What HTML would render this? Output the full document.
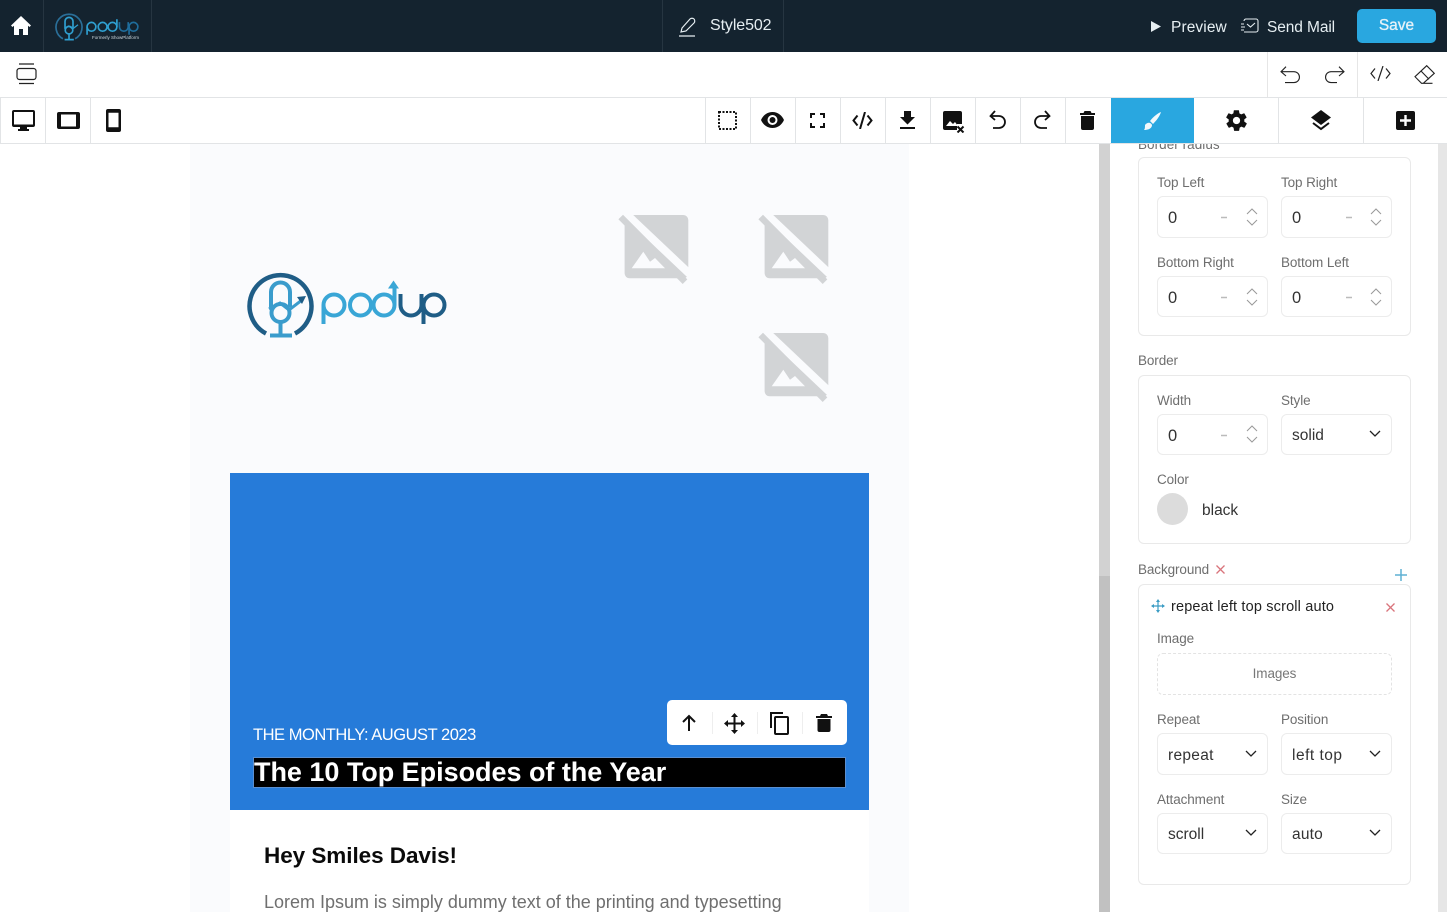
<!DOCTYPE html>
<html><head><meta charset="utf-8"><title>Style502</title>
<style>
html,body{margin:0;padding:0;width:1447px;height:912px;overflow:hidden;background:#fff;font-family:"Liberation Sans",sans-serif}
div,span,svg{position:absolute;box-sizing:border-box}
.t{white-space:nowrap;line-height:18px;height:18px}
.lab{font-size:13.5px;color:#6e6e6e;letter-spacing:-.1px}
.val{font-size:15.5px;color:#333}
.box{background:#fff;border:1px solid #ececec;border-radius:6px}
.card{background:#fff;border:1px solid #e9e9e9;border-radius:6px}
.vl{top:98px;width:1px;height:45px;background:#e2e4e6}
.w{color:#e6eef2;font-size:16px}
</style></head><body>

<!-- canvas -->
<div style="left:190px;top:143px;width:719px;height:769px;background:#fafbfd"></div>
<div style="left:230px;top:473px;width:639px;height:337px;background:#267bd9"></div>
<div style="left:230px;top:810px;width:639px;height:102px;background:#fff"></div>

<!-- logo -->
<svg style="left:240px;top:265px" width="215" height="80" viewBox="0 0 215 80" fill="none">
<path d="M26 68.500A31 31 0 1 1 55 68.500" stroke="#1f5d86" stroke-width="4.500"/>
<path d="M31 42V27a9.500 9.500 0 0 1 19 0v15" stroke="#3a9ccc" stroke-width="4"/>
<circle cx="40.500" cy="48" r="9" stroke="#3a9ccc" stroke-width="4"/>
<path d="M29 44l11-6 9 7 13-10" stroke="#3a9ccc" stroke-width="3"/>
<path d="M66 31l-9 1 5 7z" fill="#1f5d86"/>
<path d="M40.500 58v11" stroke="#3a9ccc" stroke-width="4"/>
<path d="M30 70.500h22" stroke="#3a9ccc" stroke-width="4"/>
<circle cx="94" cy="40" r="10.500" stroke="#39a6d6" stroke-width="4"/>
<path d="M83.500 40v19" stroke="#39a6d6" stroke-width="4"/>
<circle cx="120.500" cy="40" r="10.500" stroke="#39a6d6" stroke-width="4"/>
<circle cx="144" cy="40" r="10.500" stroke="#39a6d6" stroke-width="4"/>
<path d="M154.500 22v18" stroke="#39a6d6" stroke-width="4"/>
<path d="M153.500 15.500l-5.500 8h11z" fill="#39a6d6"/>
<path d="M160.500 29v11a10.500 10.500 0 0 0 21 0V29" stroke="#1f5d86" stroke-width="4"/>
<circle cx="194" cy="40" r="10.500" stroke="#1f5d86" stroke-width="4"/>
<path d="M183.500 40v19" stroke="#1f5d86" stroke-width="4"/>
</svg>

<!-- broken images -->
<svg style="left:617px;top:213px" width="73" height="73" viewBox="0 0 73 73"><rect x="7.600" y="2" width="63.700" height="63.300" rx="5" fill="#d2d4d6"/><path d="M3 -5L78 66" stroke="#fafbfd" stroke-width="8"/><path d="M3.700 4L68 68.700" stroke="#d2d4d6" stroke-width="6.500"/><path d="M14.700 55.300L26.300 38.700 33 48.700 38 45 48 55.300z" fill="#fafbfd"/></svg>
<svg style="left:757px;top:213px" width="73" height="73" viewBox="0 0 73 73"><rect x="7.600" y="2" width="63.700" height="63.300" rx="5" fill="#d2d4d6"/><path d="M3 -5L78 66" stroke="#fafbfd" stroke-width="8"/><path d="M3.700 4L68 68.700" stroke="#d2d4d6" stroke-width="6.500"/><path d="M14.700 55.300L26.300 38.700 33 48.700 38 45 48 55.300z" fill="#fafbfd"/></svg>
<svg style="left:757px;top:331px" width="73" height="73" viewBox="0 0 73 73"><rect x="7.600" y="2" width="63.700" height="63.300" rx="5" fill="#d2d4d6"/><path d="M3 -5L78 66" stroke="#fafbfd" stroke-width="8"/><path d="M3.700 4L68 68.700" stroke="#d2d4d6" stroke-width="6.500"/><path d="M14.700 55.300L26.300 38.700 33 48.700 38 45 48 55.300z" fill="#fafbfd"/></svg>

<!-- hero text -->
<div class="t" style="left:253px;top:726px;font-size:16.500px;color:#fff;letter-spacing:-.47px">THE MONTHLY: AUGUST 2023</div>
<div style="left:253px;top:757px;width:593px;height:31px;background:#000;border:1px solid #5a8fd0"></div>
<div class="t" style="left:254px;top:757px;height:30px;line-height:30px;font-size:27px;font-weight:bold;color:#fff;letter-spacing:-.03px">The 10 Top Episodes of the Year</div>
<div class="t" style="left:264px;top:843px;height:26px;line-height:26px;font-size:22.500px;font-weight:bold;color:#0a0a0a;letter-spacing:-.05px">Hey Smiles Davis!</div>
<div class="t" style="left:264px;top:890px;height:24px;line-height:24px;font-size:18px;color:#6f6f6f;letter-spacing:-.01px">Lorem Ipsum is simply dummy text of the printing and typesetting</div>

<!-- floating toolbar -->
<div style="left:667px;top:700px;width:180px;height:45px;background:#fff;border-radius:5px"></div>
<div style="left:712px;top:712px;width:1px;height:22px;background:#eee"></div>
<div style="left:757px;top:712px;width:1px;height:22px;background:#eee"></div>
<div style="left:802px;top:712px;width:1px;height:22px;background:#eee"></div>
<svg style="left:680px;top:714px" width="18" height="18" viewBox="0 0 18 18" fill="none" stroke="#111" stroke-width="2"><path d="M9 17V2M3 8l6-6 6 6"/></svg>
<svg style="left:724px;top:713px" width="21" height="21" viewBox="0 0 21 21" fill="none" stroke="#111" stroke-width="2"><path d="M10.500 3v15M3 10.500h15"/><path d="M7 4l3.500-4L14 4zM7 17l3.500 4 3.500-4zM4 7l-4 3.500L4 14zM17 7l4 3.500-4 3.500z" fill="#111" stroke="none"/></svg>
<svg style="left:769px;top:712px" width="21" height="23" viewBox="0 0 21 23" fill="none" stroke="#111" stroke-width="2"><path d="M2 16V1h12"/><rect x="6" y="5" width="13" height="17" rx="1"/></svg>
<svg style="left:816px;top:714px" width="16" height="18" viewBox="0 0 16 18"><path d="M5 0h6l1 2h4v2H0V2h4zM1.500 5h13v11a2 2 0 0 1-2 2h-9a2 2 0 0 1-2-2z" fill="#111"/></svg>

<!-- canvas scrollbar -->
<div style="left:1099px;top:143px;width:11px;height:433px;background:#d2d2d2"></div>
<div style="left:1099px;top:576px;width:11px;height:336px;background:#c1c1c1"></div>
<div style="left:1438px;top:143px;width:9px;height:769px;background:#e6e6e6"></div>

<!-- panel -->
<div class="t lab" style="left:1138px;top:136px;letter-spacing:.05px">Border radius</div>
<div style="left:1111px;top:98px;width:327px;height:46px;background:#fff"></div>

<div class="card" style="left:1138px;top:157px;width:273px;height:179px"></div>
<div class="t lab" style="left:1157px;top:174px">Top Left</div>
<div class="t lab" style="left:1281px;top:174px">Top Right</div>
<div class="box" style="left:1157px;top:196px;width:111px;height:42px"></div>
<div class="box" style="left:1281px;top:196px;width:111px;height:42px"></div>
<div class="t val" style="left:1168px;top:209px;font-size:16.500px">0</div>
<div class="t val" style="left:1292px;top:209px;font-size:16.500px">0</div>
<div class="t lab" style="left:1157px;top:254px">Bottom Right</div>
<div class="t lab" style="left:1281px;top:254px">Bottom Left</div>
<div class="box" style="left:1157px;top:276px;width:111px;height:41px"></div>
<div class="box" style="left:1281px;top:276px;width:111px;height:41px"></div>
<div class="t val" style="left:1168px;top:289px;font-size:16.500px">0</div>
<div class="t val" style="left:1292px;top:289px;font-size:16.500px">0</div>

<div class="t lab" style="left:1138px;top:352px">Border</div>
<div class="card" style="left:1138px;top:375px;width:273px;height:169px"></div>
<div class="t lab" style="left:1157px;top:392px">Width</div>
<div class="t lab" style="left:1281px;top:392px">Style</div>
<div class="box" style="left:1157px;top:414px;width:111px;height:41px"></div>
<div class="box" style="left:1281px;top:414px;width:111px;height:41px"></div>
<div class="t val" style="left:1168px;top:427px;font-size:16.500px">0</div>
<div class="t val" style="left:1292px;top:427px">solid</div>
<div class="t lab" style="left:1157px;top:471px">Color</div>
<div style="left:1157px;top:493px;width:31px;height:32px;border-radius:50%;background:#dcdcdc"></div>
<div class="t val" style="left:1202px;top:502px">black</div>

<div class="t lab" style="left:1138px;top:561px">Background</div>
<svg style="left:1215px;top:564px" width="11" height="11" viewBox="0 0 11 11" stroke="#d9747c" stroke-width="1.300"><path d="M1.500 1.500l8 8M9.500 1.500l-8 8"/></svg>
<svg style="left:1394px;top:568px" width="14" height="14" viewBox="0 0 14 14" stroke="#5fb0d4" stroke-width="1.500"><path d="M7 1v12M1 7h12"/></svg>
<div class="card" style="left:1138px;top:584px;width:273px;height:301px"></div>
<svg style="left:1151px;top:599px" width="14" height="14" viewBox="0 0 14 14" fill="none" stroke="#3b9cc4" stroke-width="1.200"><path d="M7 1v12M1 7h12"/><path d="M5 3l2-3 2 3zM5 11l2 3 2-3zM3 5l-3 2 3 2zM11 5l3 2-3 2z" fill="#3b9cc4" stroke="none"/></svg>
<div class="t" style="left:1171px;top:598px;font-size:14.500px;color:#222;letter-spacing:.16px">repeat left top scroll auto</div>
<svg style="left:1385px;top:602px" width="11" height="11" viewBox="0 0 11 11" stroke="#d9747c" stroke-width="1.300"><path d="M1.500 1.500l8 8M9.500 1.500l-8 8"/></svg>
<div class="t lab" style="left:1157px;top:630px">Image</div>
<div style="left:1157px;top:653px;width:235px;height:42px;border:1px dashed #e3e3e3;border-radius:6px"></div>
<div class="t lab" style="left:1157px;top:665px;width:235px;text-align:center;color:#777">Images</div>
<div class="t lab" style="left:1157px;top:711px">Repeat</div>
<div class="t lab" style="left:1281px;top:711px">Position</div>
<div class="box" style="left:1157px;top:733px;width:111px;height:42px"></div>
<div class="box" style="left:1281px;top:733px;width:111px;height:42px"></div>
<div class="t val" style="left:1168px;top:747px;letter-spacing:.3px">repeat</div>
<div class="t val" style="left:1292px;top:747px;letter-spacing:.5px">left top</div>
<div class="t lab" style="left:1157px;top:791px">Attachment</div>
<div class="t lab" style="left:1281px;top:791px">Size</div>
<div class="box" style="left:1157px;top:813px;width:111px;height:41px"></div>
<div class="box" style="left:1281px;top:813px;width:111px;height:41px"></div>
<div class="t val" style="left:1168px;top:826px">scroll</div>
<div class="t val" style="left:1292px;top:826px;letter-spacing:.2px">auto</div>

<!-- number spinners -->
<svg style="left:1157px;top:196px" width="235" height="260" viewBox="0 0 235 260" fill="none" stroke="#999" stroke-width="1">
<path d="M64 21.500h6M189 21.500h6M64 101.500h6M189 101.500h6M64 239.500h6" stroke="#bbb" stroke-width="1.500"/>
<path d="M90 18l5-5 5 5M90 24l5 5 5-5M214 18l5-5 5 5M214 24l5 5 5-5M90 98l5-5 5 5M90 104l5 5 5-5M214 98l5-5 5 5M214 104l5 5 5-5M90 235l5-5 5 5M90 241l5 5 5-5"/>
</svg>
<!-- select chevrons -->
<svg style="left:1157px;top:414px" width="235" height="440" viewBox="0 0 235 440" fill="none" stroke="#222" stroke-width="1.300">
<path d="M213 17l5 5 5-5M89 337l5 5 5-5M213 337l5 5 5-5M89 416l5 5 5-5M213 416l5 5 5-5"/>
</svg>

<!-- top bar -->
<div style="left:0;top:0;width:1447px;height:52px;background:#14232f"></div>
<div style="left:43px;top:0;width:1px;height:52px;background:#263541"></div>
<div style="left:151px;top:0;width:1px;height:52px;background:#263541"></div>
<div style="left:662px;top:0;width:1px;height:52px;background:#263541"></div>
<div style="left:783px;top:0;width:1px;height:52px;background:#263541"></div>
<svg style="left:11px;top:16px" width="20" height="19" viewBox="0 0 20 19"><path d="M10 0L0 9.500l1.500 1.500L3 9.700V19h5v-6h4v6h5V9.700L18.500 11 20 9.500z" fill="#fff"/></svg>
<svg style="left:52px;top:10px" width="92" height="34" viewBox="0 0 92 34" fill="none">
<g transform="scale(.42)">
<path d="M26 68.500A31 31 0 1 1 55 68.500" stroke="#2a6f99" stroke-width="4"/>
<path d="M31 42V27a9.500 9.500 0 0 1 19 0v15" stroke="#2f9fd0" stroke-width="4"/>
<circle cx="40.500" cy="48" r="9" stroke="#2f9fd0" stroke-width="4"/>
<path d="M29 44l11-6 9 7 13-10" stroke="#2f9fd0" stroke-width="3"/>
<path d="M40.500 58v11M30 70.500h22" stroke="#2f9fd0" stroke-width="4"/>
<circle cx="94" cy="40" r="10.500" stroke="#2f9fd0" stroke-width="4"/>
<path d="M83.500 40v19" stroke="#2f9fd0" stroke-width="4"/>
<circle cx="120.500" cy="40" r="10.500" stroke="#2f9fd0" stroke-width="4"/>
<circle cx="144" cy="40" r="10.500" stroke="#2f9fd0" stroke-width="4"/>
<path d="M154.500 22v18" stroke="#2f9fd0" stroke-width="4"/>
<path d="M160.500 29v11a10.500 10.500 0 0 0 21 0V29" stroke="#1f6d9c" stroke-width="4"/>
<circle cx="194" cy="40" r="10.500" stroke="#1f6d9c" stroke-width="4"/>
<path d="M183.500 40v19" stroke="#1f6d9c" stroke-width="4"/>
</g>
</svg>
<div class="t" style="left:92px;top:34px;height:8px;line-height:8px;font-size:4.500px;color:#cfd8de">Formerly ShowPlatform</div>

<svg style="left:679px;top:17px" width="18" height="20" viewBox="0 0 18 20" fill="none" stroke="#e6eef2" stroke-width="1.200"><path d="M0 19h16M2 15l1-4L11 2c1-1 3-1 4 0s1 3 0 4l-8 8z"/></svg>
<div class="t w" style="left:710px;top:17px;letter-spacing:-.1px">Style502</div>
<svg style="left:1151px;top:21px" width="10" height="11" viewBox="0 0 10 11"><path d="M0 0l10 5.500L0 11z" fill="#e6eef2"/></svg>
<div class="t w" style="left:1171px;top:19px;font-size:15.500px;letter-spacing:.1px">Preview</div>
<svg style="left:1241px;top:18px" width="18" height="17" viewBox="0 0 18 17" fill="none" stroke="#e6eef2" stroke-width="1.100"><path d="M3 3V3a2 2 0 0 1 2-2h10a2 2 0 0 1 2 2v9a2 2 0 0 1-2 2H3M6 6l3.500 3L14 5M0 6h3M0 9h4M0 12h3"/></svg>
<div class="t w" style="left:1267px;top:19px;font-size:15.500px;letter-spacing:-.1px">Send Mail</div>
<div style="left:1357px;top:9px;width:79px;height:34px;background:#29a7e0;border-radius:5px"></div>
<div class="t" style="left:1357px;top:17px;width:79px;text-align:center;font-size:15.500px;color:#e6f2f8;-webkit-text-stroke:.3px #e6f2f8">Save</div>

<!-- second row -->
<div style="left:0;top:52px;width:1447px;height:46px;background:#fff"></div>
<div style="left:0;top:97px;width:1447px;height:1px;background:#e2e4e6"></div>
<div style="left:1267px;top:52px;width:1px;height:45px;background:#e6e6e6"></div>
<div style="left:1357px;top:52px;width:1px;height:45px;background:#e6e6e6"></div>
<svg style="left:16px;top:63px" width="21" height="22" viewBox="0 0 21 22" fill="none" stroke="#222" stroke-width="1.200"><path d="M3 1h15M3 20.500h15"/><rect x="1" y="5.500" width="19" height="11" rx="2.500"/></svg>
<svg style="left:1280px;top:65px" width="22" height="19" viewBox="0 0 22 19" fill="none" stroke="#222" stroke-width="1.100"><path d="M6 1.700L1 6.700 6 11M1 6.700H14a5.400 5.400 0 0 1 0 10.900H5"/></svg>
<svg style="left:1324px;top:65px" width="22" height="19" viewBox="0 0 22 19" fill="none" stroke="#222" stroke-width="1.100"><path d="M15 1.700L20 6.700 15 11M20 6.700H7a5.400 5.400 0 0 0 0 10.900H13"/></svg>
<svg style="left:1370px;top:66px" width="21" height="15" viewBox="0 0 21 15" fill="none" stroke="#222" stroke-width="1.200"><path d="M5 2.500L1 7.500l4 5M16 2.500l4 5-4 5M13 0L8 15"/></svg>
<svg style="left:1414px;top:64px" width="22" height="21" viewBox="0 0 22 21" fill="none" stroke="#222" stroke-width="1.100"><path d="M1 12.700L12.700 1.700 20.300 9.300 9.300 19.300H7.500zM7 7l8 8.300M9 19.300h9.500"/></svg>

<!-- tool row -->
<div style="left:0;top:143px;width:1447px;height:1px;background:#e2e4e6"></div>
<div class="vl" style="left:0"></div><div class="vl" style="left:45px"></div><div class="vl" style="left:90px"></div>
<div class="vl" style="left:705px"></div><div class="vl" style="left:750px"></div><div class="vl" style="left:795px"></div><div class="vl" style="left:840px"></div><div class="vl" style="left:885px"></div><div class="vl" style="left:930px"></div><div class="vl" style="left:975px"></div><div class="vl" style="left:1020px"></div><div class="vl" style="left:1065px"></div><div class="vl" style="left:1278px"></div><div class="vl" style="left:1363px"></div>

<svg style="left:12px;top:110px" width="23" height="21" viewBox="0 0 23 21"><path d="M2 0h19a2 2 0 0 1 2 2v13a2 2 0 0 1-2 2h-6v2h2v2H6v-2h2v-2H2a2 2 0 0 1-2-2V2a2 2 0 0 1 2-2zm0 2v12.500h19V2z" fill="#111" fill-rule="evenodd"/></svg>
<svg style="left:57px;top:112px" width="23" height="17" viewBox="0 0 23 17"><path d="M2 0h19a2 2 0 0 1 2 2v13a2 2 0 0 1-2 2H2a2 2 0 0 1-2-2V2a2 2 0 0 1 2-2zm2 2.500v12h15v-12z" fill="#111" fill-rule="evenodd"/></svg>
<svg style="left:106px;top:109px" width="15" height="23" viewBox="0 0 15 23"><path d="M2 0h11a2 2 0 0 1 2 2v19a2 2 0 0 1-2 2H2a2 2 0 0 1-2-2V2a2 2 0 0 1 2-2zm.5 3.700v14.600h10V3.700z" fill="#111" fill-rule="evenodd"/></svg>

<svg style="left:718px;top:111px" width="19" height="19" viewBox="0 0 19 19" fill="none" stroke="#111" stroke-width="2" stroke-dasharray="2 1.500"><rect x="1" y="1" width="17" height="17"/></svg>
<svg style="left:761px;top:112px" width="23" height="16" viewBox="0 0 23 16"><path fill-rule="evenodd" d="M11.500 0C6 0 2 3.500 0 8c2 4.500 6 8 11.500 8S21 12.500 23 8c-2-4.500-6-8-11.500-8zm0 13a5 5 0 1 1 0-10 5 5 0 0 1 0 10z" fill="#111"/><circle cx="11.500" cy="8" r="3" fill="#111"/></svg>
<svg style="left:810px;top:113px" width="15" height="15" viewBox="0 0 15 15" fill="none" stroke="#111" stroke-width="2"><path d="M1 5V1h4M10 1h4v4M14 10v4h-4M5 14H1v-4"/></svg>
<svg style="left:852px;top:112px" width="21" height="17" viewBox="0 0 21 17" fill="none" stroke="#111" stroke-width="2"><path d="M5.500 3.500L1.500 8.500l4 5M15.500 3.500l4 5-4 5M13 0L8 17"/></svg>
<svg style="left:899px;top:111px" width="17" height="18" viewBox="0 0 17 18"><path d="M5 0h7v6h4l-7.500 7.500L1 6h4zM1 16h15v2H1z" fill="#111"/></svg>
<svg style="left:943px;top:110px" width="22" height="23" viewBox="0 0 22 23"><path d="M2 1h15a2 2 0 0 1 2 2v11h-5v6H2a2 2 0 0 1-2-2V3a2 2 0 0 1 2-2z" fill="#111"/><path d="M3 16l4-5 3 3 2-2 3 4z" fill="#fff"/><path d="M14.500 16.500l6 6M20.500 16.500l-6 6" stroke="#111" stroke-width="2"/></svg>
<svg style="left:989px;top:110px" width="17" height="20" viewBox="0 0 17 20" fill="none" stroke="#111" stroke-width="1.800"><path d="M6 1L1.500 6 6 10M1.500 6H10a5.800 5.800 0 0 1 0 12H4"/></svg>
<svg style="left:1034px;top:110px" width="17" height="20" viewBox="0 0 17 20" fill="none" stroke="#111" stroke-width="1.800"><path d="M11 1l4.500 5L11 10M15.500 6H7a5.800 5.800 0 0 0 0 12h6"/></svg>
<svg style="left:1080px;top:111px" width="15" height="19" viewBox="0 0 15 19"><path d="M4.500 0h6l1 2H15v2H0V2h3.500zM1 5h13v12a2 2 0 0 1-2 2H3a2 2 0 0 1-2-2z" fill="#111"/></svg>

<div style="left:1111px;top:98px;width:83px;height:45px;background:#29a7e0"></div>
<svg style="left:1142px;top:111px" width="20" height="20" viewBox="0 0 20 20"><path d="M19 1c-3 1-8 5-11 9l3 3c3-3 7-8 8-12z" fill="#f2f8fb"/><path d="M3 14c2-3 6-3 7 0 0 3-3 5-8 5 1-1 1-3 1-5z" fill="#f2f8fb"/></svg>
<svg style="left:1224px;top:108px" width="25" height="25" viewBox="0 0 24 24"><path fill="#111" fill-rule="evenodd" d="M19.400 13c.1-.3.100-.7.100-1s0-.7-.1-1l2.100-1.600c.2-.2.200-.4.100-.6l-2-3.500c-.1-.2-.4-.3-.6-.2l-2.500 1c-.5-.4-1.100-.7-1.700-1l-.4-2.600c0-.3-.2-.4-.5-.4h-4c-.3 0-.5.200-.5.400l-.4 2.600c-.6.300-1.200.6-1.700 1l-2.500-1c-.2-.1-.5 0-.6.200l-2 3.500c-.1.200-.1.400.1.600L4.600 11c-.1.300-.1.700-.1 1s0 .7.100 1l-2.100 1.600c-.2.200-.2.400-.1.600l2 3.500c.1.200.4.300.6.200l2.500-1c.5.400 1.100.7 1.700 1l.4 2.600c0 .3.200.4.500.4h4c.3 0 .5-.2.500-.4l.4-2.600c.6-.3 1.200-.6 1.700-1l2.500 1c.2.100.5 0 .6-.2l2-3.500c.1-.2.100-.4-.1-.6zM12 15.500a3.500 3.500 0 1 1 0-7 3.500 3.500 0 0 1 0 7z"/></svg>
<svg style="left:1311px;top:110px" width="20" height="21" viewBox="0 0 20 21"><path d="M10 0l10 7.500-10 7.500L0 7.500z" fill="#111"/><path d="M2 13l8 6 8-6" fill="none" stroke="#111" stroke-width="2"/></svg>
<svg style="left:1396px;top:111px" width="19" height="19" viewBox="0 0 19 19"><rect width="19" height="19" rx="2" fill="#111"/><path d="M9.500 4v11M4 9.500h11" stroke="#fff" stroke-width="2.400"/></svg>
</body></html>
